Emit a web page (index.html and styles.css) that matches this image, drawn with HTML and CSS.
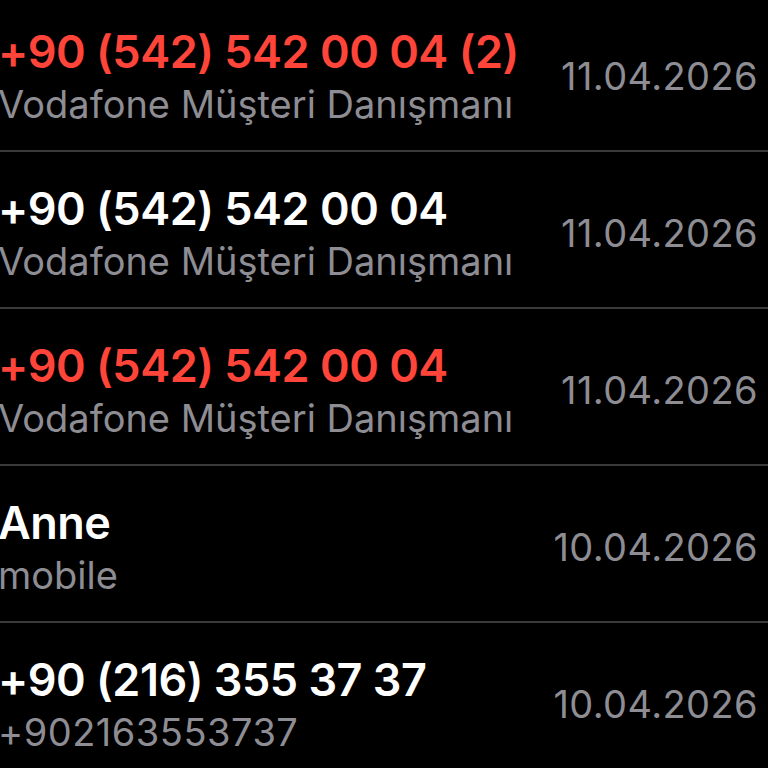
FILE: index.html
```html
<!DOCTYPE html>
<html lang="tr">
<head>
<meta charset="utf-8">
<link rel="stylesheet" href="styles.css">
</head>
<body>
<ul class="calls">
  <li class="call">
    <div class="info">
      <div class="title missed">+90 (542) 542 00 04 (2)</div>
      <div class="sub">Vodafone Müşteri Danışmanı</div>
    </div>
    <div class="date">11.04.2026</div>
  </li>
  <li class="call">
    <div class="info">
      <div class="title">+90 (542) 542 00 04</div>
      <div class="sub">Vodafone Müşteri Danışmanı</div>
    </div>
    <div class="date">11.04.2026</div>
  </li>
  <li class="call">
    <div class="info">
      <div class="title missed">+90 (542) 542 00 04</div>
      <div class="sub">Vodafone Müşteri Danışmanı</div>
    </div>
    <div class="date">11.04.2026</div>
  </li>
  <li class="call">
    <div class="info">
      <div class="title">Anne</div>
      <div class="sub">mobile</div>
    </div>
    <div class="date">10.04.2026</div>
  </li>
  <li class="call">
    <div class="info">
      <div class="title">+90 (216) 355 37 37</div>
      <div class="sub num">+902163553737</div>
    </div>
    <div class="date">10.04.2026</div>
  </li>
</ul>
</body>
</html>
```
FILE: styles.css
```css
html, body {
  margin: 0;
  padding: 0;
  background: #000;
  width: 768px;
  height: 768px;
  overflow: hidden;
}
body {
  font-family: Inter, "Liberation Sans", sans-serif;
  color: #fff;
}
.calls {
  list-style: none;
  margin: -5px 0 0 -2px;
  padding: 0;
}
.call {
  display: flex;
  align-items: center;
  justify-content: space-between;
  height: 155px;
  border-bottom: 2px solid #3a3a3c;
  padding-right: 10px;
}
.info {
  display: flex;
  flex-direction: column;
  padding-top: 8px;
}
.title {
  font-size: 45px;
  font-weight: 600;
  line-height: 54px;
  color: #fff;
  letter-spacing: -0.5px;
}
.title.missed {
  color: #ff453a;
}
.sub {
  font-size: 38px;
  line-height: 50px;
  color: #8d8d93;
}
.sub.num {
  letter-spacing: 0.5px;
}
.date {
  font-size: 38px;
  letter-spacing: 0.4px;
  color: #8d8d93;
  margin-top: 6px;
}
```
